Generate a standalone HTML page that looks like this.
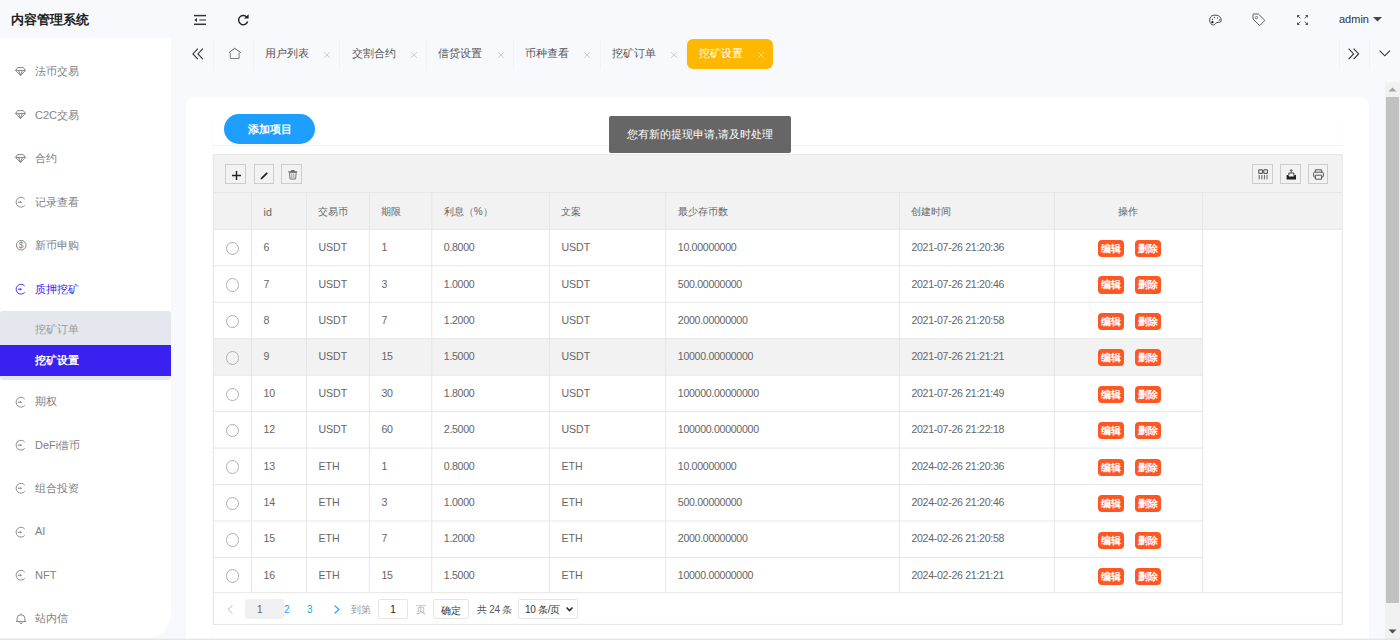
<!DOCTYPE html>
<html><head><meta charset="utf-8">
<style>
*{margin:0;padding:0;box-sizing:border-box}
html,body{width:1400px;height:640px;overflow:hidden}
body{position:relative;background:#f7f9fd;font-family:"Liberation Sans",sans-serif;color:#666}
.abs{position:absolute}
svg{position:absolute;overflow:visible}
/* header */
.logo{left:10.7px;top:10.5px;font-size:13px;font-weight:bold;color:#222;line-height:18px;white-space:nowrap}
.admin{left:1339px;top:12px;font-size:11px;color:#333;line-height:14px}
/* sidebar */
.side{left:0;top:38px;width:171px;height:600px;background:#fff;border-bottom-right-radius:24px}
.mi{position:absolute;left:35px;font-size:11px;line-height:14px;color:#8a8a8a;white-space:nowrap}
.sub{position:absolute;left:0;top:311px;width:171px;height:69px;background:#e4e7ee;border-radius:3px}
.subsel{position:absolute;left:0;top:345px;width:171px;height:31px;background:#3b20f2}
/* tabs */
.tsep{position:absolute;top:39px;width:1px;height:31px;background:#f1f2f5}
.tab{position:absolute;top:46px;font-size:11px;line-height:14px;color:#555;white-space:nowrap}
.tx{position:absolute;top:46px;font-size:12px;line-height:14px;color:#bbb}
.tact{left:687px;top:38.5px;width:86px;height:30.5px;background:#ffb800;border-radius:6px}
/* card */
.card{left:186px;top:97px;width:1183px;height:560px;background:#fff;border-radius:10px}
.icard{left:212.6px;top:113px;width:1129.6px;height:540px;background:#fff;border-radius:6px;box-shadow:0 1px 1.5px rgba(0,0,0,.07)}
.chdr{left:213px;top:145px;width:1129px;height:1px;background:#f3f3f3}
.addbtn{left:224px;top:114px;width:91px;height:30px;background:#1e9fff;border-radius:15px;color:#fff;font-size:11px;font-weight:bold;text-align:center;line-height:30px}
.toast{left:609px;top:116px;width:182px;height:37px;background:#666;border-radius:2px;color:#fff;font-size:11px;line-height:37px;text-align:center;white-space:nowrap;z-index:5}
/* table */
.tbl{left:213px;top:154px;width:1129px;height:471px;border:1px solid #e6e6e6}
.tool{left:213px;top:154px;width:1129px;height:39px;background:#f2f2f2;border:1px solid #e6e6e6;border-bottom:1px solid #e6e6e6}
.tb{position:absolute;top:164.2px;width:20.4px;height:19.6px;border:1px solid #ccc;background:#f2f2f2}
.thead{left:214px;top:193px;width:1127px;height:36px;background:#f2f2f2}
.hl{position:absolute;height:1px;background:#e6e6e6}
.vl{position:absolute;width:1px;background:#e6e6e6}
.c{position:absolute;font-size:10.6px;line-height:14px;color:#666;white-space:nowrap}
.ck{position:absolute;width:13.6px;height:13.6px;border:1px solid #b0b0b0;border-radius:50%}
.eb{position:absolute;width:26.2px;height:17.2px;background:#ff5722;border-radius:4px;color:#fff;font-size:10px;font-weight:bold;line-height:17px;text-align:center}
/* pager */
.pg{position:absolute;font-size:10px;line-height:14px;white-space:nowrap}
/* scrollbar */
.sb{left:1385px;top:82px;width:15px;height:558px;background:#f1f1f1}
.thumb{left:1386px;top:97px;width:13px;height:506px;background:#c1c1c1}
.bline{left:0;top:638px;width:1400px;height:2px;background:#dde0e6}

.num{letter-spacing:-0.3px}

.hc{font-size:10px}

</style></head>
<body>
<div class="abs logo">内容管理系统</div>
<svg style="left:194px;top:14px" width="13" height="12" viewBox="0 0 13 12"><g stroke="#333" stroke-width="1.5"><line x1="0" y1="1.6" x2="12" y2="1.6"/><line x1="5.3" y1="6" x2="12" y2="6" stroke="#555" stroke-width="1.3"/><line x1="0" y1="10.3" x2="12" y2="10.3"/></g><path d="M0.3 6 L3 4 L3 8 Z" fill="#333"/></svg>
<svg style="left:237px;top:14px" width="13" height="12" viewBox="0 0 13 12"><path d="M9.8 3.2 A4.6 4.6 0 1 0 10.6 7.5" fill="none" stroke="#222" stroke-width="1.4"/><path d="M7 4.6 L11.6 4.6 L11.6 0.2 Z" fill="#222"/></svg>
<svg style="left:1209px;top:14px" width="14" height="12" viewBox="0 0 14 12"><path d="M4.6 1.2 C2 1.5 0.7 3.8 0.7 6.2 C0.7 9.2 2.6 11 4.4 11 C6 11 6.2 9.2 7.8 8.6 C9.6 8 11.6 9 12.1 7 C12.6 4.4 10.6 1.2 7 1.2 Z" fill="none" stroke="#333" stroke-width="0.9"/><circle cx="3.5" cy="8.2" r="1.1" fill="#111"/><circle cx="3.4" cy="5.5" r="0.65" fill="#444"/><circle cx="5.5" cy="3.5" r="0.65" fill="#444"/><circle cx="8.5" cy="3.9" r="0.65" fill="#444"/><circle cx="10.4" cy="6" r="0.65" fill="#444"/></svg>
<svg style="left:1252px;top:13px" width="14" height="14" viewBox="0 0 14 14"><path d="M1 1.6 Q1 1 1.6 1 L6.4 1 L12.8 7.4 L7.6 12.6 L1 6 Z" fill="none" stroke="#555" stroke-width="0.95" stroke-linejoin="round"/><circle cx="4.5" cy="4.6" r="1.1" fill="none" stroke="#555" stroke-width="0.85"/></svg>
<svg style="left:1297px;top:15px" width="11" height="10" viewBox="0 0 11 10"><g fill="none" stroke="#333" stroke-width="0.85"><path d="M0.5 2.4 V0.5 H2.4 M0.6 0.6 L3.4 3.4"/><path d="M10.5 2.4 V0.5 H8.6 M10.4 0.6 L7.6 3.4"/><path d="M0.5 7.6 V9.5 H2.4 M0.6 9.4 L3.4 6.6"/><path d="M10.5 7.6 V9.5 H8.6 M10.4 9.4 L7.6 6.6"/></g></svg>
<div class="abs admin">admin</div>
<svg style="left:1373px;top:17px" width="10" height="5" viewBox="0 0 10 5"><path d="M0 0 H9 L4.5 4.5 Z" fill="#444"/></svg>
<div class="abs side"></div>
<div class="sub"></div>
<div class="subsel"></div>
<div class="mi" style="top:64px;color:#808080">法币交易</div>
<svg style="left:15.2px;top:66.7px" width="11" height="9" viewBox="0 0 11 9"><path d="M2.6 0.6 H8.4 L10.4 3.4 L5.5 8.6 L0.6 3.4 Z M0.6 3.4 H10.4 M3.6 3.4 L5.5 8.4 L7.4 3.4" fill="none" stroke="#808080" stroke-width="0.95" stroke-linejoin="round"/></svg>
<div class="mi" style="top:107.5px;color:#808080">C2C交易</div>
<svg style="left:15.2px;top:110.2px" width="11" height="9" viewBox="0 0 11 9"><path d="M2.6 0.6 H8.4 L10.4 3.4 L5.5 8.6 L0.6 3.4 Z M0.6 3.4 H10.4 M3.6 3.4 L5.5 8.4 L7.4 3.4" fill="none" stroke="#808080" stroke-width="0.95" stroke-linejoin="round"/></svg>
<div class="mi" style="top:151px;color:#808080">合约</div>
<svg style="left:15.2px;top:153.7px" width="11" height="9" viewBox="0 0 11 9"><path d="M2.6 0.6 H8.4 L10.4 3.4 L5.5 8.6 L0.6 3.4 Z M0.6 3.4 H10.4 M3.6 3.4 L5.5 8.4 L7.4 3.4" fill="none" stroke="#808080" stroke-width="0.95" stroke-linejoin="round"/></svg>
<div class="mi" style="top:194.5px;color:#808080">记录查看</div>
<svg style="left:16px;top:197.3px" width="10" height="10.4" viewBox="0 0 10 10.4"><path d="M8.75 2.05 A4.9 4.9 0 1 0 8.75 8.35" fill="none" stroke="#808080" stroke-width="0.9"/><path d="M1.9 5.2 H5" stroke="#808080" stroke-width="1"/><path d="M4.4 3.9 L6 5.2 L4.4 6.5 Z" fill="#808080"/></svg>
<div class="mi" style="top:238px;color:#808080">新币申购</div>
<svg style="left:15.8px;top:239.8px" width="10.4" height="10.4" viewBox="0 0 10.4 10.4"><circle cx="5.2" cy="5.2" r="4.8" fill="none" stroke="#808080" stroke-width="0.95"/><text x="5.2" y="8.3" font-size="8.5" text-anchor="middle" fill="#808080" font-family="Liberation Sans">$</text></svg>
<div class="mi" style="top:281.5px;color:#3b20f2">质押挖矿</div>
<svg style="left:16px;top:284.3px" width="10" height="10.4" viewBox="0 0 10 10.4"><path d="M8.75 2.05 A4.9 4.9 0 1 0 8.75 8.35" fill="none" stroke="#3b20f2" stroke-width="0.9"/><path d="M1.9 5.2 H5" stroke="#3b20f2" stroke-width="1"/><path d="M4.4 3.9 L6 5.2 L4.4 6.5 Z" fill="#3b20f2"/></svg>
<div class="mi" style="top:394px;color:#808080">期权</div>
<svg style="left:16px;top:396.8px" width="10" height="10.4" viewBox="0 0 10 10.4"><path d="M8.75 2.05 A4.9 4.9 0 1 0 8.75 8.35" fill="none" stroke="#808080" stroke-width="0.9"/><path d="M1.9 5.2 H5" stroke="#808080" stroke-width="1"/><path d="M4.4 3.9 L6 5.2 L4.4 6.5 Z" fill="#808080"/></svg>
<div class="mi" style="top:437.5px;color:#808080">DeFi借币</div>
<svg style="left:16px;top:440.3px" width="10" height="10.4" viewBox="0 0 10 10.4"><path d="M8.75 2.05 A4.9 4.9 0 1 0 8.75 8.35" fill="none" stroke="#808080" stroke-width="0.9"/><path d="M1.9 5.2 H5" stroke="#808080" stroke-width="1"/><path d="M4.4 3.9 L6 5.2 L4.4 6.5 Z" fill="#808080"/></svg>
<div class="mi" style="top:480.5px;color:#808080">组合投资</div>
<svg style="left:16px;top:483.3px" width="10" height="10.4" viewBox="0 0 10 10.4"><path d="M8.75 2.05 A4.9 4.9 0 1 0 8.75 8.35" fill="none" stroke="#808080" stroke-width="0.9"/><path d="M1.9 5.2 H5" stroke="#808080" stroke-width="1"/><path d="M4.4 3.9 L6 5.2 L4.4 6.5 Z" fill="#808080"/></svg>
<div class="mi" style="top:524px;color:#808080">AI</div>
<svg style="left:16px;top:526.8px" width="10" height="10.4" viewBox="0 0 10 10.4"><path d="M8.75 2.05 A4.9 4.9 0 1 0 8.75 8.35" fill="none" stroke="#808080" stroke-width="0.9"/><path d="M1.9 5.2 H5" stroke="#808080" stroke-width="1"/><path d="M4.4 3.9 L6 5.2 L4.4 6.5 Z" fill="#808080"/></svg>
<div class="mi" style="top:567.5px;color:#808080">NFT</div>
<svg style="left:16px;top:570.3px" width="10" height="10.4" viewBox="0 0 10 10.4"><path d="M8.75 2.05 A4.9 4.9 0 1 0 8.75 8.35" fill="none" stroke="#808080" stroke-width="0.9"/><path d="M1.9 5.2 H5" stroke="#808080" stroke-width="1"/><path d="M4.4 3.9 L6 5.2 L4.4 6.5 Z" fill="#808080"/></svg>
<div class="mi" style="top:611px;color:#808080">站内信</div>
<svg style="left:16px;top:612.8px" width="10" height="11" viewBox="0 0 10 11"><path d="M1.1 8.6 V5.6 A3.9 3.9 0 0 1 8.9 5.6 V8.6 M0 8.6 H10 M5 0.4 V1.6 M3.8 9.4 A1.2 1.2 0 0 0 6.2 9.4" fill="none" stroke="#808080" stroke-width="0.95"/></svg>
<div class="mi" style="top:322px;color:#999">挖矿订单</div>
<div class="mi" style="top:352.5px;color:#fff;font-weight:bold">挖矿设置</div>
<svg style="left:191.5px;top:47.6px" width="12" height="12" viewBox="0 0 12 12"><path d="M5.9 0.6 L0.9 5.9 L5.9 11.2 M10.9 0.6 L5.9 5.9 L10.9 11.2" fill="none" stroke="#333" stroke-width="1.1"/></svg>
<svg style="left:228px;top:47px" width="13" height="13" viewBox="0 0 13 13"><path d="M0.8 5.7 L6.7 1.3 L12.8 5.7" fill="none" stroke="#555" stroke-width="0.95"/><path d="M2.3 5.8 V11.5 H11.1 V5.8" fill="none" stroke="#777" stroke-width="0.95"/></svg>
<div class="tsep" style="left:213px"></div>
<div class="tsep" style="left:252.6px"></div>
<div class="tsep" style="left:339.3px"></div>
<div class="tab" style="left:264.9px">用户列表</div>
<svg style="left:324.2px;top:51.9px" width="6" height="6" viewBox="0 0 6 6"><path d="M0 0 L6 6 M6 0 L0 6" stroke="#c8c8c8" stroke-width="0.85"/></svg>
<div class="tsep" style="left:426.0px"></div>
<div class="tab" style="left:351.6px">交割合约</div>
<svg style="left:410.9px;top:51.9px" width="6" height="6" viewBox="0 0 6 6"><path d="M0 0 L6 6 M6 0 L0 6" stroke="#c8c8c8" stroke-width="0.85"/></svg>
<div class="tsep" style="left:512.8px"></div>
<div class="tab" style="left:438.3px">借贷设置</div>
<svg style="left:497.6px;top:51.9px" width="6" height="6" viewBox="0 0 6 6"><path d="M0 0 L6 6 M6 0 L0 6" stroke="#c8c8c8" stroke-width="0.85"/></svg>
<div class="tsep" style="left:599.5px"></div>
<div class="tab" style="left:525.1px">币种查看</div>
<svg style="left:584.4px;top:51.9px" width="6" height="6" viewBox="0 0 6 6"><path d="M0 0 L6 6 M6 0 L0 6" stroke="#c8c8c8" stroke-width="0.85"/></svg>
<div class="tsep" style="left:686.2px"></div>
<div class="tab" style="left:611.8px">挖矿订单</div>
<svg style="left:671.1px;top:51.9px" width="6" height="6" viewBox="0 0 6 6"><path d="M0 0 L6 6 M6 0 L0 6" stroke="#c8c8c8" stroke-width="0.85"/></svg>
<div class="abs tact"></div>
<div class="tab" style="left:699px;color:#fff">挖矿设置</div>
<svg style="left:757.8px;top:51.9px" width="6" height="6" viewBox="0 0 6 6"><path d="M0 0 L6 6 M6 0 L0 6" stroke="#ffe39a" stroke-width="0.85"/></svg>
<div class="tsep" style="left:1338.5px"></div>
<div class="tsep" style="left:1369.4px"></div>
<svg style="left:1348px;top:47.6px" width="12" height="12" viewBox="0 0 12 12"><path d="M0.6 0.6 L5.6 5.9 L0.6 11.2 M5.6 0.6 L10.6 5.9 L5.6 11.2" fill="none" stroke="#333" stroke-width="1.1"/></svg>
<svg style="left:1379px;top:49.5px" width="12" height="7" viewBox="0 0 12 7"><path d="M0.6 0.6 L5.8 5.8 L11 0.6" fill="none" stroke="#333" stroke-width="1.1"/></svg>
<div class="abs card"></div>
<div class="abs icard"></div>
<div class="abs chdr"></div>
<div class="abs addbtn">添加项目</div>
<div class="abs toast">您有新的提现申请,请及时处理</div>
<svg style="left:0;top:0" width="1400" height="640" viewBox="0 0 1400 640"><rect x="213.4" y="154.6" width="1128.8" height="469.79999999999995" fill="#fff"/><rect x="213.4" y="154.6" width="1128.8" height="74.70000000000002" fill="#f2f2f2"/><rect x="213.4" y="338.68" width="989.1999999999999" height="36.45999999999998" fill="#f2f2f2"/><rect x="212.90" y="154.10" width="1129.80" height="1" fill="#e6e6e6"/><rect x="212.90" y="623.90" width="1129.80" height="1" fill="#e6e6e6"/><rect x="212.90" y="154.10" width="1" height="470.80" fill="#e6e6e6"/><rect x="1341.70" y="154.10" width="1" height="470.80" fill="#e6e6e6"/><rect x="212.90" y="192.00" width="1129.80" height="1" fill="#e6e6e6"/><rect x="212.90" y="228.80" width="1129.80" height="1" fill="#e6e6e6"/><rect x="212.90" y="265.26" width="990.20" height="1" fill="#e6e6e6"/><rect x="212.90" y="301.72" width="990.20" height="1" fill="#e6e6e6"/><rect x="212.90" y="338.18" width="990.20" height="1" fill="#e6e6e6"/><rect x="212.90" y="374.64" width="990.20" height="1" fill="#e6e6e6"/><rect x="212.90" y="411.10" width="990.20" height="1" fill="#e6e6e6"/><rect x="212.90" y="447.56" width="990.20" height="1" fill="#e6e6e6"/><rect x="212.90" y="484.02" width="990.20" height="1" fill="#e6e6e6"/><rect x="212.90" y="520.48" width="990.20" height="1" fill="#e6e6e6"/><rect x="212.90" y="556.94" width="990.20" height="1" fill="#e6e6e6"/><rect x="212.90" y="592.20" width="1129.80" height="1" fill="#e6e6e6"/><rect x="251.10" y="192.00" width="1" height="401.20" fill="#e6e6e6"/><rect x="305.90" y="192.00" width="1" height="401.20" fill="#e6e6e6"/><rect x="368.90" y="192.00" width="1" height="401.20" fill="#e6e6e6"/><rect x="431.30" y="192.00" width="1" height="401.20" fill="#e6e6e6"/><rect x="548.90" y="192.00" width="1" height="401.20" fill="#e6e6e6"/><rect x="665.30" y="192.00" width="1" height="401.20" fill="#e6e6e6"/><rect x="898.90" y="192.00" width="1" height="401.20" fill="#e6e6e6"/><rect x="1053.90" y="192.00" width="1" height="401.20" fill="#e6e6e6"/><rect x="1202.10" y="192.00" width="1" height="401.20" fill="#e6e6e6"/></svg>
<div class="tb" style="left:225.3px"></div>
<div class="tb" style="left:254px"></div>
<div class="tb" style="left:281.4px"></div>
<div class="tb" style="left:1252.2px"></div>
<div class="tb" style="left:1280.4px"></div>
<div class="tb" style="left:1308.1px"></div>
<svg style="left:231.9px;top:170.6px" width="9" height="9" viewBox="0 0 9 9"><path d="M4.5 0 V9 M0 4.5 H9" stroke="#222" stroke-width="1.4"/></svg>
<svg style="left:260px;top:170.6px" width="9" height="9" viewBox="0 0 9 9"><path d="M0.6 8.4 L1 6.8 L6.6 1.2 L7.8 2.4 L2.2 8 Z" fill="#222"/></svg>
<svg style="left:287.5px;top:170.3px" width="10" height="9.5" viewBox="0 0 10 9.5"><path d="M0.4 1.8 H9.2 M3.5 1.8 V0.6 H6.1 V1.8" fill="none" stroke="#555" stroke-width="1"/><path d="M1.4 2.4 H8.2 L7.6 9 H2 Z" fill="none" stroke="#777" stroke-width="1"/><path d="M3.8 3.5 V8 M5.8 3.5 V8" stroke="#888" stroke-width="0.8"/></svg>
<svg style="left:1257.5px;top:169px" width="11" height="11" viewBox="0 0 11 11"><path d="M0.8 0.8 H4.4 V4.4 H0.8 Z M5.8 0.8 H9.4 V4.4 H5.8 Z" fill="none" stroke="#444" stroke-width="1"/><path d="M1.2 6 V10.4 M3.8 6 V10.4 M6.4 6 V10.4 M9 6 V10.4" stroke="#555" stroke-width="0.9"/></svg>
<svg style="left:1285.5px;top:169px" width="11" height="11" viewBox="0 0 11 11"><path d="M0.6 6 H2 L3 7.4 H7.6 L8.6 6 H10 V10.6 H0.6 Z" fill="#222"/><path d="M2.8 6.6 V4 H7.8 V6.6" fill="none" stroke="#333" stroke-width="0.9"/><path d="M5.2 3.6 L5.2 0.8 M4 1.8 L5.2 0.6 L6.4 1.8" fill="none" stroke="#333" stroke-width="0.9"/></svg>
<svg style="left:1313px;top:169px" width="11" height="11" viewBox="0 0 11 11"><path d="M2.4 3.2 V0.8 H8.6 V3.2" fill="none" stroke="#444" stroke-width="0.9"/><rect x="0.6" y="3.2" width="9.8" height="4.8" rx="1" fill="none" stroke="#444" stroke-width="0.9"/><path d="M2.4 6.2 V10.2 H8.6 V6.2 Z" fill="#f2f2f2" stroke="#444" stroke-width="0.9"/></svg>
<div class="c" style="left:263.6px;top:205.4px">id</div>
<div class="c hc" style="left:318.4px;top:205.4px">交易币</div>
<div class="c hc" style="left:381.4px;top:205.4px">期限</div>
<div class="c hc" style="left:443.8px;top:205.4px">利息（%）</div>
<div class="c hc" style="left:561.4px;top:205.4px">文案</div>
<div class="c hc" style="left:677.8px;top:205.4px">最少存币数</div>
<div class="c hc" style="left:911.4px;top:205.4px">创建时间</div>
<div class="c hc" style="left:1054.4px;width:148.2px;text-align:center;top:205.4px">操作</div>
<div class="ck" style="left:225.8px;top:241.6px"></div>
<div class="c num" style="left:263.6px;top:240px">6</div>
<div class="c" style="left:318.4px;top:240px">USDT</div>
<div class="c num" style="left:381.4px;top:240px">1</div>
<div class="c num" style="left:443.8px;top:240px">0.8000</div>
<div class="c" style="left:561.4px;top:240px">USDT</div>
<div class="c num" style="left:677.8px;top:240px">10.00000000</div>
<div class="c num" style="left:911.4px;top:240px">2021-07-26 21:20:36</div>
<div class="eb" style="left:1097.7px;top:239.9px">编辑</div>
<div class="eb" style="left:1134.5px;top:239.9px">删除</div>
<div class="ck" style="left:225.8px;top:278.1px"></div>
<div class="c num" style="left:263.6px;top:277px">7</div>
<div class="c" style="left:318.4px;top:277px">USDT</div>
<div class="c num" style="left:381.4px;top:277px">3</div>
<div class="c num" style="left:443.8px;top:277px">1.0000</div>
<div class="c" style="left:561.4px;top:277px">USDT</div>
<div class="c num" style="left:677.8px;top:277px">500.00000000</div>
<div class="c num" style="left:911.4px;top:277px">2021-07-26 21:20:46</div>
<div class="eb" style="left:1097.7px;top:276.4px">编辑</div>
<div class="eb" style="left:1134.5px;top:276.4px">删除</div>
<div class="ck" style="left:225.8px;top:314.6px"></div>
<div class="c num" style="left:263.6px;top:313px">8</div>
<div class="c" style="left:318.4px;top:313px">USDT</div>
<div class="c num" style="left:381.4px;top:313px">7</div>
<div class="c num" style="left:443.8px;top:313px">1.2000</div>
<div class="c" style="left:561.4px;top:313px">USDT</div>
<div class="c num" style="left:677.8px;top:313px">2000.00000000</div>
<div class="c num" style="left:911.4px;top:313px">2021-07-26 21:20:58</div>
<div class="eb" style="left:1097.7px;top:312.9px">编辑</div>
<div class="eb" style="left:1134.5px;top:312.9px">删除</div>
<div class="ck" style="left:225.8px;top:351.0px"></div>
<div class="c num" style="left:263.6px;top:349px">9</div>
<div class="c" style="left:318.4px;top:349px">USDT</div>
<div class="c num" style="left:381.4px;top:349px">15</div>
<div class="c num" style="left:443.8px;top:349px">1.5000</div>
<div class="c" style="left:561.4px;top:349px">USDT</div>
<div class="c num" style="left:677.8px;top:349px">10000.00000000</div>
<div class="c num" style="left:911.4px;top:349px">2021-07-26 21:21:21</div>
<div class="eb" style="left:1097.7px;top:349.3px">编辑</div>
<div class="eb" style="left:1134.5px;top:349.3px">删除</div>
<div class="ck" style="left:225.8px;top:387.5px"></div>
<div class="c num" style="left:263.6px;top:386px">10</div>
<div class="c" style="left:318.4px;top:386px">USDT</div>
<div class="c num" style="left:381.4px;top:386px">30</div>
<div class="c num" style="left:443.8px;top:386px">1.8000</div>
<div class="c" style="left:561.4px;top:386px">USDT</div>
<div class="c num" style="left:677.8px;top:386px">100000.00000000</div>
<div class="c num" style="left:911.4px;top:386px">2021-07-26 21:21:49</div>
<div class="eb" style="left:1097.7px;top:385.8px">编辑</div>
<div class="eb" style="left:1134.5px;top:385.8px">删除</div>
<div class="ck" style="left:225.8px;top:423.9px"></div>
<div class="c num" style="left:263.6px;top:422px">12</div>
<div class="c" style="left:318.4px;top:422px">USDT</div>
<div class="c num" style="left:381.4px;top:422px">60</div>
<div class="c num" style="left:443.8px;top:422px">2.5000</div>
<div class="c" style="left:561.4px;top:422px">USDT</div>
<div class="c num" style="left:677.8px;top:422px">100000.00000000</div>
<div class="c num" style="left:911.4px;top:422px">2021-07-26 21:22:18</div>
<div class="eb" style="left:1097.7px;top:422.2px">编辑</div>
<div class="eb" style="left:1134.5px;top:422.2px">删除</div>
<div class="ck" style="left:225.8px;top:460.4px"></div>
<div class="c num" style="left:263.6px;top:459px">13</div>
<div class="c" style="left:318.4px;top:459px">ETH</div>
<div class="c num" style="left:381.4px;top:459px">1</div>
<div class="c num" style="left:443.8px;top:459px">0.8000</div>
<div class="c" style="left:561.4px;top:459px">ETH</div>
<div class="c num" style="left:677.8px;top:459px">10.00000000</div>
<div class="c num" style="left:911.4px;top:459px">2024-02-26 21:20:36</div>
<div class="eb" style="left:1097.7px;top:458.7px">编辑</div>
<div class="eb" style="left:1134.5px;top:458.7px">删除</div>
<div class="ck" style="left:225.8px;top:496.9px"></div>
<div class="c num" style="left:263.6px;top:495px">14</div>
<div class="c" style="left:318.4px;top:495px">ETH</div>
<div class="c num" style="left:381.4px;top:495px">3</div>
<div class="c num" style="left:443.8px;top:495px">1.0000</div>
<div class="c" style="left:561.4px;top:495px">ETH</div>
<div class="c num" style="left:677.8px;top:495px">500.00000000</div>
<div class="c num" style="left:911.4px;top:495px">2024-02-26 21:20:46</div>
<div class="eb" style="left:1097.7px;top:495.1px">编辑</div>
<div class="eb" style="left:1134.5px;top:495.1px">删除</div>
<div class="ck" style="left:225.8px;top:533.3px"></div>
<div class="c num" style="left:263.6px;top:531px">15</div>
<div class="c" style="left:318.4px;top:531px">ETH</div>
<div class="c num" style="left:381.4px;top:531px">7</div>
<div class="c num" style="left:443.8px;top:531px">1.2000</div>
<div class="c" style="left:561.4px;top:531px">ETH</div>
<div class="c num" style="left:677.8px;top:531px">2000.00000000</div>
<div class="c num" style="left:911.4px;top:531px">2024-02-26 21:20:58</div>
<div class="eb" style="left:1097.7px;top:531.6px">编辑</div>
<div class="eb" style="left:1134.5px;top:531.6px">删除</div>
<div class="ck" style="left:225.8px;top:569.2px"></div>
<div class="c num" style="left:263.6px;top:568px">16</div>
<div class="c" style="left:318.4px;top:568px">ETH</div>
<div class="c num" style="left:381.4px;top:568px">15</div>
<div class="c num" style="left:443.8px;top:568px">1.5000</div>
<div class="c" style="left:561.4px;top:568px">ETH</div>
<div class="c num" style="left:677.8px;top:568px">10000.00000000</div>
<div class="c num" style="left:911.4px;top:568px">2024-02-26 21:21:21</div>
<div class="eb" style="left:1097.7px;top:567.5px">编辑</div>
<div class="eb" style="left:1134.5px;top:567.5px">删除</div>
<svg style="left:227px;top:604.5px" width="6" height="9" viewBox="0 0 6 9"><path d="M5.5 0.5 L1 4.5 L5.5 8.5" fill="none" stroke="#bbb" stroke-width="1"/></svg>
<div class="abs" style="left:244.6px;top:599.2px;width:39px;height:20.2px;background:#f0f0f0;border-radius:3px"></div>
<div class="pg" style="left:257px;top:603px;color:#666">1</div>
<div class="pg" style="left:284px;top:603px;color:#1e9fff">2</div>
<div class="pg" style="left:307px;top:603px;color:#1e9fff">3</div>
<svg style="left:333.5px;top:604.5px" width="6" height="9" viewBox="0 0 6 9"><path d="M0.5 0.5 L5 4.5 L0.5 8.5" fill="none" stroke="#1e9fff" stroke-width="1.1"/></svg>
<div class="pg" style="left:350.5px;top:603px;color:#999">到第</div>
<div class="abs" style="left:378.2px;top:599.2px;width:29.5px;height:20.3px;border:1px solid #e6e6e6;background:#fff;border-radius:2px"></div>
<div class="pg" style="left:378.2px;width:29.5px;text-align:center;top:603px;color:#222">1</div>
<div class="pg" style="left:416px;top:603px;color:#aaa">页</div>
<div class="abs" style="left:433.2px;top:599.2px;width:35.6px;height:20.3px;border:1px solid #e6e6e6;background:#fff;border-radius:2px"></div>
<div class="pg" style="left:433.2px;width:35.6px;text-align:center;top:603.5px;color:#333">确定</div>
<div class="pg" style="left:477px;top:603px;color:#555;letter-spacing:-0.32px">共 24 条</div>
<div class="abs" style="left:518.3px;top:599.2px;width:59.3px;height:20.3px;border:1px solid #e6e6e6;background:#fff;border-radius:2px"></div>
<div class="pg" style="left:525px;top:603px;color:#333;letter-spacing:-0.3px">10 条/页</div>
<svg style="left:565.8px;top:606.5px" width="7" height="5" viewBox="0 0 7 5"><path d="M0.6 0.6 L3.5 3.6 L6.4 0.6" fill="none" stroke="#222" stroke-width="1.5"/></svg>
<div class="abs sb"></div>
<div class="abs thumb"></div>
<svg style="left:1388px;top:87px" width="9" height="5" viewBox="0 0 9 5"><path d="M0.5 4.5 L4.5 0.5 L8.5 4.5 Z" fill="#a3a3a3"/></svg>
<svg style="left:1388px;top:629px" width="9" height="5" viewBox="0 0 9 5"><path d="M0.5 0.5 L4.5 4.5 L8.5 0.5 Z" fill="#505050"/></svg>
<svg style="left:0;top:630px" width="1400" height="10" viewBox="0 630 1400 10"><rect x="0" y="638.6" width="1400" height="1.4" fill="#e3e5e9"/></svg>
</body></html>
